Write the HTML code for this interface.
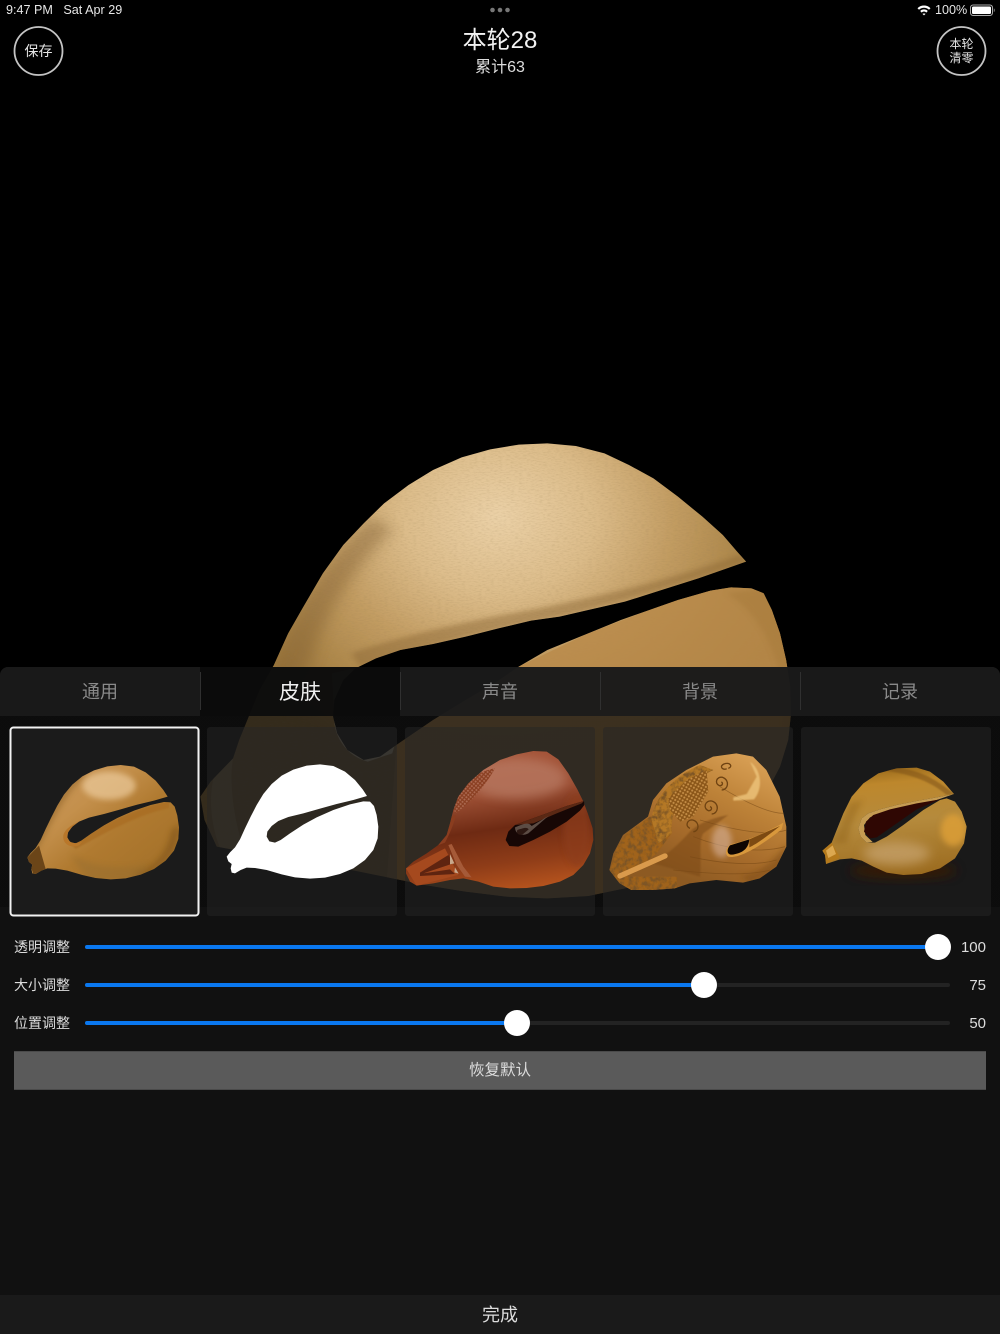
<!DOCTYPE html>
<html><head><meta charset="utf-8">
<style>
*{margin:0;padding:0;box-sizing:border-box}
html,body{width:1000px;height:1334px;background:#000;overflow:hidden}
body{position:relative;font-family:"Liberation Sans","Noto Sans CJK SC",sans-serif;color:#fff}
.a{position:absolute;white-space:nowrap}
.c{text-align:center}
svg{position:absolute;left:0;top:0}
.panel{position:absolute;left:0;top:667px;width:1000px;height:667px;background:linear-gradient(rgba(17,17,17,.74),rgba(17,17,17,.74) 240px,#111 240px);border-radius:8px 8px 0 0}
.tab{position:absolute;top:667px;height:49px;width:200px;background:rgba(27,27,27,.93);text-align:center;font-size:18px;line-height:51px;color:#8a8a8a}
.tab.on{background:rgba(12,12,12,.93);color:#f0f0f0;font-size:21px}
.sep{position:absolute;top:672px;height:38px;width:1px;background:#303030}
.card{position:absolute;top:727px;height:189px;width:190px;background:rgba(37,37,37,.5);border-radius:3px}
.lbl{position:absolute;left:14px;font-size:14px;line-height:20px;color:#ddd;white-space:nowrap}
.val{position:absolute;right:14px;font-size:15px;line-height:20px;color:#ddd}
.tr{position:absolute;left:85px;width:865px;height:4px;border-radius:2px;background:#232323}
.fi{position:absolute;left:85px;height:4px;border-radius:2px;background:#0a78f0}
.th{position:absolute;width:26px;height:26px;border-radius:50%;background:#fff}
</style></head><body>

<svg width="1000" height="1334" viewBox="0 0 1000 1334">
<defs>
<radialGradient id="big" gradientUnits="userSpaceOnUse" cx="780" cy="290" r="780">
<stop offset="0" stop-color="#ebd1a7"/><stop offset=".3" stop-color="#dcbc8a"/><stop offset=".55" stop-color="#c29c62"/><stop offset=".8" stop-color="#a98346"/><stop offset="1" stop-color="#9a7438"/>
</radialGradient>
<filter id="grain" x="0" y="0" width="100%" height="100%">
<feTurbulence type="fractalNoise" baseFrequency=".1 .3" numOctaves="3" seed="5"/>
<feColorMatrix values="0 0 0 0 .35 0 0 0 0 .24 0 0 0 0 .1 0 0 0 .6 -.26"/>
<feComposite in2="SourceGraphic" operator="in" result="n"/>
<feMerge><feMergeNode in="SourceGraphic"/><feMergeNode in="n"/></feMerge>
</filter>
<filter id="b6" x="-20%" y="-20%" width="140%" height="140%"><feGaussianBlur stdDeviation="7"/></filter>
<filter id="b16" x="-30%" y="-30%" width="160%" height="160%"><feGaussianBlur stdDeviation="18"/></filter>
<clipPath id="bigClip"><polygon id="bigP" points="50,1130 75,1085 130,1015 145,960 165,900 195,810 230,735 265,640 300,565 350,460 400,375 450,310 500,250 560,195 620,150 690,112 760,88 830,74 900,70 970,78 1040,100 1100,135 1160,175 1220,230 1280,290 1330,345 1365,395 1387,425 1340,445 1270,475 1180,510 1090,545 1000,570 930,590 860,602 780,625 700,650 620,672 540,690 480,715 430,745 400,780 378,840 375,890 385,940 410,990 450,1020 490,1010 530,975 620,900 700,840 770,790 830,740 900,690 1000,640 1080,600 1150,570 1220,540 1300,512 1350,502 1400,505 1430,520 1450,570 1470,640 1485,720 1495,800 1497,880 1490,960 1470,1040 1440,1110 1390,1190 1330,1260 1260,1320 1180,1370 1090,1405 1000,1428 900,1435 800,1430 700,1415 600,1395 500,1370 400,1345 300,1320 200,1305 90,1280 60,1200"/></clipPath>
</defs>
<g transform="translate(180 420) scale(.40816 .33333)">
<use href="#bigP" fill="url(#big)" filter="url(#grain)"/>
<g clip-path="url(#bigClip)">
<polygon points="530,975 620,900 830,740 1000,640 1150,570 1300,500 1600,480 1600,1500 500,1500" fill="#b98a4a" opacity=".8"/>
<path d="M1340 520 L1600 480 L1600 1100 L1480 1000 C1500 800 1450 600 1340 520Z" fill="#a67a3a" opacity=".5" filter="url(#b6)"/>
<path d="M215 770 C270 590 350 430 470 290 L520 330 C420 450 350 590 320 730 L280 790Z" fill="#7a5a2e" opacity=".4" filter="url(#b16)"/>
<path d="M440 740 C620 672 780 625 930 590 C1090 545 1270 475 1387 425 L1370 405 C1200 480 1040 525 880 565 C740 595 560 640 420 700Z" fill="#8a6634" opacity=".45" filter="url(#b6)"/>
<path d="M378 890 L372 760 L425 745 L420 890 C425 940 450 975 490 978 L530 960 L520 1000 L460 1025 C410 1010 375 950 378 890Z" fill="#efdcb6"/>
<path d="M90 1040 L130 1015 C120 1080 130 1200 160 1300 L100 1290 C70 1200 70 1110 90 1040Z" fill="#c8ab7a" opacity=".5"/>
</g>
</g>
</svg>

<div class="panel"></div>
<div class="tab" style="left:0;border-radius:8px 0 0 0">通用</div>
<div class="tab on" style="left:200px">皮肤</div>
<div class="tab" style="left:400px">声音</div>
<div class="tab" style="left:600px">背景</div>
<div class="tab" style="left:800px;border-radius:0 8px 0 0">记录</div>
<div class="sep" style="left:200px"></div><div class="sep" style="left:400px"></div><div class="sep" style="left:600px"></div><div class="sep" style="left:800px"></div>

<div class="card" style="left:10px;background:#1b1b1b"></div>
<div class="card" style="left:207px"></div>
<div class="card" style="left:405px"></div>
<div class="card" style="left:603px"></div>
<div class="card" style="left:801px"></div>

<svg width="1000" height="1334" viewBox="0 0 1000 1334">
<defs>
<linearGradient id="natG" gradientUnits="userSpaceOnUse" x1="780" y1="140" x2="1040" y2="470"><stop offset="0" stop-color="#c9965a"/><stop offset=".3" stop-color="#c4904c"/><stop offset=".6" stop-color="#b07a30"/><stop offset="1" stop-color="#a5722a"/></linearGradient>
<linearGradient id="redG" gradientUnits="userSpaceOnUse" x1="300" y1="95" x2="360" y2="505"><stop offset="0" stop-color="#a65539"/><stop offset=".3" stop-color="#9c4f34"/><stop offset=".55" stop-color="#6e2a13"/><stop offset=".8" stop-color="#8e3c18"/><stop offset="1" stop-color="#b3521d"/></linearGradient>
<linearGradient id="woodG" gradientUnits="userSpaceOnUse" x1="1060" y1="110" x2="880" y2="490"><stop offset="0" stop-color="#d9a055"/><stop offset=".35" stop-color="#bd8238"/><stop offset=".7" stop-color="#a56a2a"/><stop offset="1" stop-color="#8d5a22"/></linearGradient>
<linearGradient id="goldG" gradientUnits="userSpaceOnUse" x1="300" y1="143" x2="330" y2="465"><stop offset="0" stop-color="#9c6c1c"/><stop offset=".14" stop-color="#bd872c"/><stop offset=".5" stop-color="#b58a3c"/><stop offset="1" stop-color="#9c6c20"/></linearGradient>
<pattern id="mesh" width="9" height="9" patternUnits="userSpaceOnUse" patternTransform="rotate(40)"><rect width="9" height="9" fill="#8a3f22"/><circle cx="4.5" cy="4.5" r="3" fill="#ad6a52"/></pattern>
<pattern id="mesh2" width="10" height="10" patternUnits="userSpaceOnUse" patternTransform="rotate(30)"><rect width="10" height="10" fill="#8a5518"/><circle cx="5" cy="5" r="3.2" fill="#c68f48"/></pattern>
<filter id="bl2"><feGaussianBlur stdDeviation="2"/></filter>
<filter id="bl8" x="-30%" y="-30%" width="160%" height="160%"><feGaussianBlur stdDeviation="9"/></filter>
<filter id="bl14" x="-40%" y="-40%" width="180%" height="180%"><feGaussianBlur stdDeviation="16"/></filter>
<filter id="carve" x="0" y="0" width="100%" height="100%">
<feTurbulence type="fractalNoise" baseFrequency=".07" numOctaves="3" seed="9"/>
<feColorMatrix values="0 0 0 0 .2 0 0 0 0 .09 0 0 0 0 .02 0 0 0 3 -1.2"/>
<feComposite in2="SourceGraphic" operator="in" result="n"/>
<feMerge><feMergeNode in="SourceGraphic"/><feMergeNode in="n"/></feMerge>
</filter>
<clipPath id="clipN"><polygon id="shape" points="680,410 690,397 705,382 720,358 735,325 752,290 770,255 790,222 815,192 845,167 880,149 920,137 960,133 1000,138 1035,155 1065,180 1088,208 1101,228 1060,240 1010,252 960,266 910,280 865,291 835,303 815,318 802,335 800,350 808,364 825,368 842,360 870,340 910,314 950,292 1000,270 1050,253 1090,244 1110,245 1122,258 1130,285 1135,320 1133,355 1120,390 1095,420 1060,445 1020,462 975,473 930,476 885,472 845,463 800,450 765,444 740,443 722,450 705,460 695,458 692,445 695,432 685,424"/></clipPath>
<clipPath id="clipR"><polygon id="redP" points="18,445 40,425 80,400 115,375 140,345 150,310 160,270 175,230 205,190 250,150 300,120 350,103 400,93 440,95 475,118 505,160 532,208 550,245 565,285 578,325 580,360 570,400 550,435 520,465 480,485 430,498 380,504 330,505 280,500 235,485 190,475 150,480 100,490 50,497 30,485 18,460"/></clipPath>
<clipPath id="clipW"><polygon id="woodP" points="628,450 640,400 669,345 744,290 759,240 799,190 859,150 939,110 1009,100 1059,110 1099,150 1139,230 1159,320 1159,380 1129,440 1079,475 1029,488 949,480 869,490 824,505 759,510 694,510 659,490"/></clipPath>
<clipPath id="clipG"><polygon id="goldP" points="97,392 125,368 140,330 160,280 185,230 220,190 265,160 320,145 380,143 420,155 460,185 492,222 440,232 380,243 320,255 270,268 235,280 215,295 205,325 212,350 230,368 255,368 290,350 340,315 400,270 450,240 470,235 495,245 515,275 530,320 522,370 495,415 450,445 395,462 340,465 290,458 250,440 215,422 185,415 150,418 108,432 105,405"/></clipPath>
</defs>

<!-- natural gourd -->
<g transform="translate(0 720) scale(.33333) translate(-598 2)">
<use href="#shape" fill="url(#natG)"/>
<g clip-path="url(#clipN)">
<path d="M690 420 C740 350 770 240 860 160 L800 150 L670 350Z" fill="#8a5e24" opacity=".5" filter="url(#bl8)"/>
<ellipse cx="925" cy="195" rx="80" ry="42" fill="#eccb9c" opacity=".7" filter="url(#bl8)"/>
<path d="M800 360 C880 330 1000 260 1105 243 L1105 262 C1000 285 900 345 825 385Z" fill="#a86c20" opacity=".7" filter="url(#bl2)"/>
<path d="M680 410 L715 375 L735 445 L700 465Z" fill="#6b4518"/>
<path d="M1020 470 C1100 440 1140 380 1135 310 L1112 330 C1100 400 1060 440 1000 462Z" fill="#7a5018" opacity=".55" filter="url(#bl8)"/>
<path d="M810 400 C880 440 960 450 1040 430 L1020 480 L860 480Z" fill="#8f6a30" opacity=".35" filter="url(#bl8)"/>
</g>
<path d="M788 345 C785 370 810 384 835 374 L846 362 C825 372 805 368 800 350 C798 335 810 318 835 303 C815 312 792 325 788 345Z" fill="#b9772a"/>
</g>
<rect x="10.5" y="727.5" width="188" height="188" rx="3" fill="none" stroke="#f2f2f2" stroke-width="2"/>

<!-- white gourd -->
<g transform="translate(0 720) scale(.33333)"><use href="#shape" fill="#fff"/></g>

<!-- red gourd -->
<g transform="translate(400 720) scale(.33333)">
<use href="#redP" fill="url(#redG)"/>
<g clip-path="url(#clipR)">
<ellipse cx="350" cy="175" rx="150" ry="62" fill="#c99682" opacity=".45" filter="url(#bl14)"/>
<path d="M285 145 C250 150 210 170 180 210 C165 235 160 265 165 280 C200 260 255 200 285 145Z" fill="url(#mesh)"/>
<path d="M150 290 C130 325 110 360 90 385 L135 368 C150 340 162 310 168 285Z" fill="#8a3d1f"/>
<ellipse cx="530" cy="330" rx="40" ry="110" fill="#8c3d1a" opacity=".7" filter="url(#bl8)"/>
<path d="M18 445 L135 385 L160 435 L175 465 L50 497 Z" fill="#a5491e"/>
<path d="M60 458 L145 405 L160 430 L70 460 L150 448 L165 462 L60 468Z" fill="#5e2410"/>
<path d="M145 375 L155 372 L190 440 L215 472 L195 470 L170 435Z" fill="#a55a38"/>
<path d="M150 402 L163 430 L150 433Z M165 442 L176 461 L163 457Z" fill="#c8a88c"/>
</g>
<polygon points="552,243 500,258 440,280 380,302 345,315 325,335 317,360 328,378 355,380 400,360 450,335 500,305 540,272 553,255" fill="#170705"/>
<path d="M552 243 L500 258 L440 280 L380 302 L345 315 L400 310 L470 280 L545 250Z" fill="#5a2814"/>
<path d="M345 322 C370 312 385 305 395 318 L445 288 L385 340 C365 350 345 342 345 322Z" fill="#7a6a60" opacity=".7"/>
<path d="M352 330 C370 325 380 320 386 328 L368 343 C355 347 348 340 352 330Z" fill="#2d1812"/>
</g>

<!-- carved wood gourd -->
<g transform="translate(400 720) scale(.33333)">
<use href="#woodP" fill="url(#woodG)"/>
<g clip-path="url(#clipW)">
<g fill="none" stroke="#6f4312" stroke-width="2.5" opacity=".5">
<path d="M900 300 C1000 330 1100 350 1160 330"/><path d="M880 350 C980 390 1080 400 1155 380"/><path d="M960 200 C1040 250 1110 280 1150 280"/><path d="M870 410 C960 430 1060 440 1130 420"/><path d="M820 450 C920 460 1040 470 1110 450"/>
</g>
<path d="M628 460 L650 385 L680 340 L750 290 L800 290 L815 340 L770 400 L680 470 L830 470 L830 510 L660 510Z" fill="#a0641f" filter="url(#carve)"/>
<path d="M755 300 C760 230 830 165 900 135 L940 150 C880 180 810 240 815 340 L775 370Z" fill="#b47828" filter="url(#carve)"/>
<polygon points="805,235 860,180 920,150 925,215 880,290 840,305 810,270" fill="url(#mesh2)"/>
<path d="M985 285 C950 292 900 305 870 335 C840 370 800 405 760 430 L900 470 C905 420 895 360 910 340Z" fill="#7c4a16" opacity=".55" filter="url(#bl2)"/>
<ellipse cx="965" cy="365" rx="30" ry="48" fill="#e0c0b0" opacity=".5" filter="url(#bl8)"/>
<path d="M1000 232 L1040 222 L1070 170 L1050 125 C1085 150 1090 205 1062 238 L1000 242Z" fill="#eec57c" opacity=".8" filter="url(#bl2)"/>
<path d="M1020 465 C1060 470 1120 430 1160 370 L1160 440 L1050 490Z" fill="#7f4e16" opacity=".6" filter="url(#bl8)"/>
<g fill="none" stroke="#6f4312" stroke-width="4">
<path d="M965 210 C985 210 990 180 968 172 C950 168 942 190 958 197 C968 198 970 188 964 186"/>
<path d="M935 282 C955 282 960 250 935 243 C915 240 908 265 925 272 C935 273 938 262 930 260"/>
<path d="M880 335 C898 335 900 305 878 300 C860 298 855 320 870 325"/>
<path d="M985 145 C1000 140 990 125 972 132 C955 140 970 152 980 146"/>
</g>
</g>
<path d="M660 468 L795 408" stroke="#d99a4c" stroke-width="16" stroke-linecap="round"/>
<path d="M1150 308 C1100 338 1040 362 995 372 C978 380 972 402 985 410 C1010 416 1060 395 1145 328Z" fill="#d8983c"/>
<path d="M1048 358 L990 376 C978 390 982 405 996 404 C1020 400 1045 392 1048 358Z" fill="#0e0603"/>
<path d="M1048 358 L1140 318 C1100 350 1070 372 1048 382Z" fill="#7d4a12"/>
</g>

<!-- gold gourd -->
<g transform="translate(790 720) scale(.33333)">
<ellipse cx="340" cy="452" rx="160" ry="24" fill="#3d1c02" opacity=".8" filter="url(#bl14)"/>
<use href="#goldP" fill="url(#goldG)"/>
<g clip-path="url(#clipG)">
<ellipse cx="490" cy="330" rx="38" ry="48" fill="#dc9f38" opacity=".85" filter="url(#bl8)"/>
<ellipse cx="320" cy="400" rx="100" ry="35" fill="#c9a672" opacity=".7" filter="url(#bl14)"/>
<path d="M492 222 C420 160 340 130 260 150 C340 155 420 180 470 225Z" fill="#7a4f12" opacity=".5" filter="url(#bl2)"/>
<path d="M180 250 C160 300 140 340 125 370 L170 370 C180 320 200 270 220 240Z" fill="#8e6118" opacity=".4" filter="url(#bl8)"/>
<path d="M97 392 L125 368 L150 412 L108 432 L105 405Z" fill="#b57a1c"/>
<path d="M108 392 L128 376 L138 402 L115 414Z" fill="#dca850"/>
</g>
<polygon points="492,222 440,232 380,243 320,255 270,268 235,280 215,295 205,325 212,350 230,368 248,366 226,345 222,315 240,292 290,276 360,258 440,240" fill="#c59b52"/>
<polygon points="450,238 380,250 300,268 250,285 228,305 222,335 240,355 260,352 320,310 380,268" fill="#2f0703"/>
</g>

<!-- status icons -->
<path d="M917.5 8.2 C921 4.6 927 4.6 930.5 8.2 L929 9.8 C926.2 7 921.8 7 919 9.8Z M920.2 11 C922.3 8.8 925.7 8.8 927.8 11 L926.3 12.6 C925 11.2 923 11.2 921.7 12.6Z M924 13.4 L925.6 13.9 L924 15.4 L922.4 13.9Z" fill="#fff"/>
<rect x="970.5" y="5" width="22" height="10.5" rx="2.6" fill="none" stroke="#aaa" stroke-width="1"/>
<rect x="972" y="6.5" width="19" height="7.5" rx="1.4" fill="#fff"/>
<path d="M993.8 8.4 C995 8.7 995 11.8 993.8 12.1Z" fill="#999"/>
<circle cx="492.5" cy="10" r="2.3" fill="#777"/><circle cx="500" cy="10" r="2.3" fill="#777"/><circle cx="507.5" cy="10" r="2.3" fill="#777"/>
<circle cx="38.5" cy="51" r="24" fill="none" stroke="#c4c4c4" stroke-width="1.8"/>
<circle cx="961.5" cy="51" r="24" fill="none" stroke="#c4c4c4" stroke-width="1.8"/>
</svg>

<div class="a" style="left:6px;top:2px;font-size:12.6px;line-height:16px;color:#e6e6e6">9:47 PM&nbsp;&nbsp; Sat Apr 29</div>
<div class="a" style="left:935px;top:2px;font-size:12.6px;line-height:16px;color:#e6e6e6">100%</div>
<div class="a c" style="left:400px;width:200px;top:25px;font-size:24px;line-height:32px;color:#f2f2f2">本轮28</div>
<div class="a c" style="left:400px;width:200px;top:57px;font-size:16px;line-height:22px;color:#ddd">累计63</div>
<div class="a c" style="left:14px;width:49px;top:41px;font-size:14px;line-height:20px;color:#e4e4e4">保存</div>
<div class="a c" style="left:937px;width:49px;top:37px;font-size:12px;line-height:14px;color:#e4e4e4;white-space:normal">本轮<br>清零</div>

<div class="lbl" style="top:937px">透明调整</div>
<div class="lbl" style="top:975px">大小调整</div>
<div class="lbl" style="top:1013px">位置调整</div>
<div class="tr" style="top:945px"></div><div class="fi" style="top:945px;width:853px"></div><div class="th" style="left:925px;top:934px"></div>
<div class="tr" style="top:983px"></div><div class="fi" style="top:983px;width:619px"></div><div class="th" style="left:691px;top:972px"></div>
<div class="tr" style="top:1021px"></div><div class="fi" style="top:1021px;width:432px"></div><div class="th" style="left:504px;top:1010px"></div>
<div class="val" style="top:938px">100</div>
<div class="val" style="top:976px">75</div>
<div class="val" style="top:1014px">50</div>

<div class="a c" style="left:14px;top:1051px;width:972px;height:39px;background:#5a5a5a;border-top:1px solid #4a4a4a;border-bottom:1px solid #4a4a4a;font-size:15.5px;line-height:37px;color:#ddd">恢复默认</div>
<div class="a c" style="left:0;top:1295px;width:1000px;height:39px;background:#1a1a1a;font-size:18px;line-height:40px;color:#ddd">完成</div>
</body></html>
